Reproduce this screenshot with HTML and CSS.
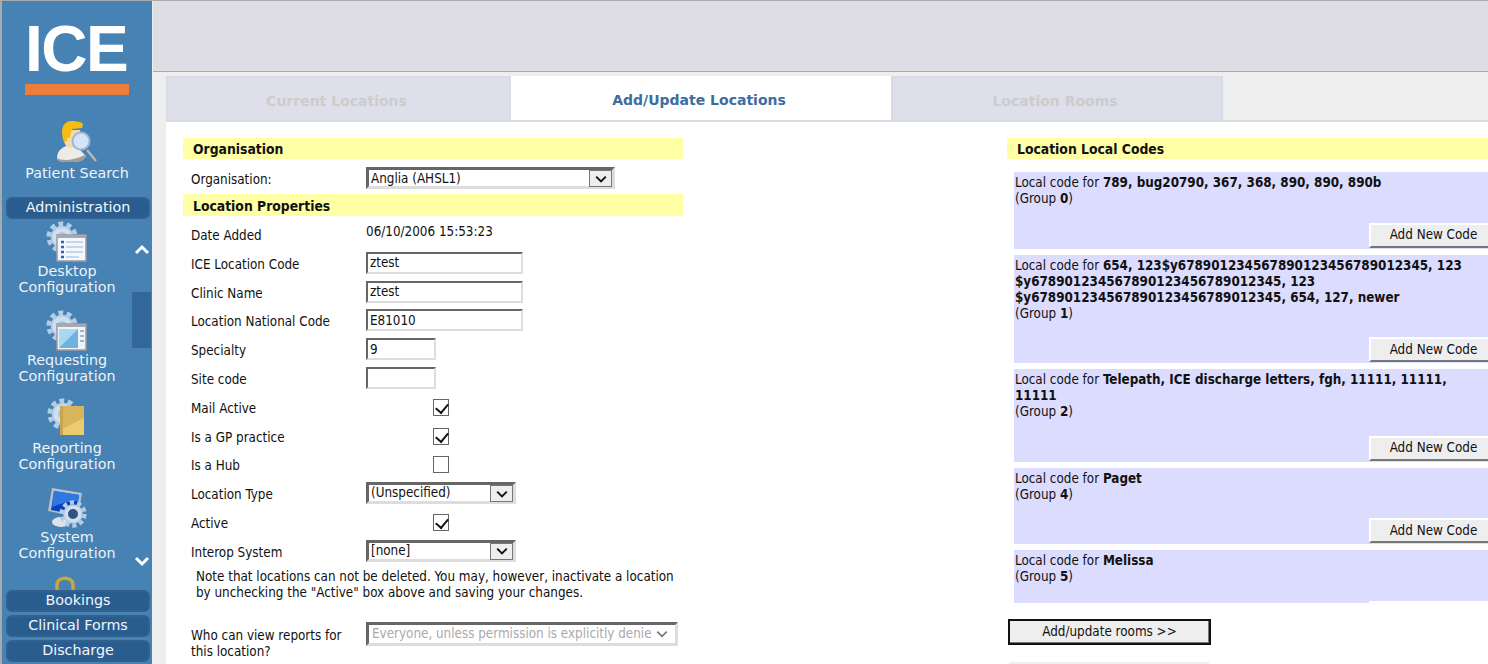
FILE: index.html
```html
<!DOCTYPE html>
<html lang="en">
<head>
    <meta charset="UTF-8">
    <title>ICE - Add/Update Locations</title>
    <link rel="stylesheet" href="styles.css">
</head>
<body>

<svg class="defs" width="0" height="0">
    <defs>
        <symbol id="gear" viewBox="0 0 40 40">
            <circle cx="20" cy="20" r="16.5" fill="none" stroke="#b4cce4" stroke-width="6" stroke-dasharray="6 4.4"/>
            <circle cx="20" cy="20" r="13" fill="#cfdff0" stroke="#b4cce4" stroke-width="2"/>
            <circle cx="20" cy="20" r="6" fill="#a9c4df"/>
        </symbol>
    </defs>
</svg>

<div class="app">

    <nav class="sidebar">
        <div class="logo">
            <div class="logo-text">ICE</div>
            <div class="logo-bar"></div>
        </div>

        <a class="patient-search">
            <svg class="icon" viewBox="0 0 42 42">
                <path d="M1 37c0-8 6-12 14-13l6 2 9 9c-2 5-8 6-15 6S1 41 1 37z" fill="#ecebe6"/>
                <path d="M1 37c4 3 16 3 28-3l1 1c-2 5-8 6-15 6S1 41 1 37z" fill="#9d9c96"/>
                <path d="M8 9h16v10c0 5-4 8-8 8s-8-3-8-8z" fill="#f7d9a8"/>
                <path d="M8 21C4 10 6 0 16 0c4 0 10 1 11 3l-1 4-10 1c-1 3-2 7-2 9-2-1-4 1-3 3z" fill="#f4bd12"/>
                <path d="M31 29l9 11" stroke="#b9b5ab" stroke-width="2.5"/>
                <circle cx="25" cy="20" r="8.5" fill="#d3e4f7" stroke="#9db8d6" stroke-width="2"/>
            </svg>
            <span>Patient Search</span>
        </a>

        <div class="pill">Administration</div>

        <div class="nav-scroll">
            <div class="nav-items">
                <a class="nav-item">
                    <svg class="icon" viewBox="0 0 42 42">
                        <use href="#gear" x="0" y="0" width="32" height="32"/>
                        <rect x="11" y="14" width="29" height="26" fill="#f4f7fb" stroke="#9a9aa2" stroke-width="1.5"/>
                        <rect x="11" y="14" width="29" height="3" fill="#a8a8b0"/>
                        <path d="M15 21h3M15 26h3M15 31h3M15 36h3" stroke="#2a63b8" stroke-width="2.5"/>
                        <path d="M20 21h17M20 26h17M20 31h17M20 36h13" stroke="#b6cde6" stroke-width="1.5"/>
                    </svg>
                    <span>Desktop<br>Configuration</span>
                </a>
                <a class="nav-item">
                    <svg class="icon" viewBox="0 0 42 42">
                        <use href="#gear" x="0" y="0" width="32" height="32"/>
                        <rect x="11" y="14" width="29" height="26" fill="#f0f3f7" stroke="#9a9aa2" stroke-width="1.5"/>
                        <rect x="11" y="14" width="29" height="3" fill="#a8a8b0"/>
                        <rect x="13" y="19" width="19" height="19" fill="#6fb2e0"/>
                        <path d="M13 19h19L13 38z" fill="#a9d8f2"/>
                        <path d="M34 21h4M34 26h4M34 31h4" stroke="#9ab4d0" stroke-width="2"/>
                    </svg>
                    <span>Requesting<br>Configuration</span>
                </a>
                <a class="nav-item">
                    <svg class="icon" viewBox="0 0 42 42">
                        <use href="#gear" x="1" y="0" width="32" height="32"/>
                        <path d="M14 8h24v29H14z" fill="#eacb6d"/>
                        <path d="M14 8h24v12L14 32z" fill="#d8b45c"/>
                        <path d="M14 8h3v29h-3z" fill="#c9a552"/>
                    </svg>
                    <span>Reporting<br>Configuration</span>
                </a>
                <a class="nav-item">
                    <svg class="icon" viewBox="0 0 42 42">
                        <ellipse cx="15" cy="35" rx="9" ry="5" fill="#dfe2e6"/>
                        <path d="M6 1l30 5-4 24-30-6z" fill="#b7c0cc"/>
                        <path d="M8 4l25 4-3 20-25-5z" fill="#0d3fb8"/>
                        <path d="M8 4l25 4-1 6c-10 0-18 3-26 6z" fill="#2f78e0"/>
                        <use href="#gear" x="13" y="13" width="28" height="28"/>
                        <circle cx="27" cy="27" r="5" fill="#31527f"/>
                    </svg>
                    <span>System<br>Configuration</span>
                </a>
                <a class="nav-item">
                    <svg class="icon" viewBox="0 0 42 42">
                        <path d="M11 20V9c0-9 16-9 16 0v11" fill="none" stroke="#c9a73c" stroke-width="3.5"/>
                    </svg>
                </a>
            </div>
            <div class="nav-thumb"></div>
            <svg class="nav-arrow nav-arrow-up" viewBox="0 0 16 12"><path d="M2 10l6-6 6 6" fill="none" stroke="#fff" stroke-width="3"/></svg>
            <svg class="nav-arrow nav-arrow-down" viewBox="0 0 16 12"><path d="M2 2l6 6 6-6" fill="none" stroke="#fff" stroke-width="3"/></svg>
        </div>

        <div class="pill">Bookings</div>
        <div class="pill">Clinical Forms</div>
        <div class="pill">Discharge</div>
    </nav>

    <div class="main">
        <div class="topbar"></div>

        <div class="tabs">
            <div class="tab tab-current">Current Locations</div>
            <div class="tab tab-active">Add/Update Locations</div>
            <div class="tab tab-rooms">Location Rooms</div>
        </div>

        <div class="panel">
            <section class="left">
                <h2 class="section-head">Organisation</h2>
                <div class="org-row">
                    <label>Organisation:</label>
                    <div class="select select-org">
                        <select><option>Anglia (AHSL1)</option></select>
                        <span class="select-btn"><svg viewBox="0 0 10 6"><path d="M1 1l4 4 4-4" fill="none" stroke="#111" stroke-width="1.6"/></svg></span>
                    </div>
                </div>
                <h2 class="section-head">Location Properties</h2>

                <div class="props">
                    <label>Date Added</label>
                    <div class="date-value">06/10/2006 15:53:23</div>

                    <label>ICE Location Code</label>
                    <input class="text-long" type="text" value="ztest">

                    <label>Clinic Name</label>
                    <input class="text-long" type="text" value="ztest">

                    <label>Location National Code</label>
                    <input class="text-long" type="text" value="E81010">

                    <label>Specialty</label>
                    <input class="text-short" type="text" value="9">

                    <label>Site code</label>
                    <input class="text-short" type="text" value="">

                    <label>Mail Active</label>
                    <input class="check" type="checkbox" checked>

                    <label>Is a GP practice</label>
                    <input class="check" type="checkbox" checked>

                    <label>Is a Hub</label>
                    <input class="check" type="checkbox">

                    <label>Location Type</label>
                    <div class="select select-small">
                        <select><option>(Unspecified)</option></select>
                        <span class="select-btn"><svg viewBox="0 0 10 6"><path d="M1 1l4 4 4-4" fill="none" stroke="#111" stroke-width="1.6"/></svg></span>
                    </div>

                    <label>Active</label>
                    <input class="check" type="checkbox" checked>

                    <label>Interop System</label>
                    <div class="select select-small">
                        <select><option>[none]</option></select>
                        <span class="select-btn"><svg viewBox="0 0 10 6"><path d="M1 1l4 4 4-4" fill="none" stroke="#111" stroke-width="1.6"/></svg></span>
                    </div>
                </div>

                <p class="note">Note that locations can not be deleted. You may, however, inactivate a location by unchecking the "Active" box above and saving your changes.</p>

                <div class="who-row">
                    <label>Who can view reports for this location?</label>
                    <div class="select select-who">
                        <select disabled><option>Everyone, unless permission is explicitly denied</option></select>
                        <span class="select-flat"><svg viewBox="0 0 10 6"><path d="M1 1l4 4 4-4" fill="none" stroke="#777" stroke-width="1.4"/></svg></span>
                    </div>
                </div>
            </section>

            <section class="right">
                <h2 class="section-head">Location Local Codes</h2>

                <div class="code-card">
                    <div>Local code for <b>789, bug20790, 367, 368, 890, 890, 890b</b><br>(Group <b>0</b>)</div>
                    <button class="add-code">Add New Code</button>
                </div>
                <div class="code-card">
                    <div>Local code for <b>654, 123$y678901234567890123456789012345, 123 $y678901234567890123456789012345, 123 $y678901234567890123456789012345, 654, 127, newer</b><br>(Group <b>1</b>)</div>
                    <button class="add-code">Add New Code</button>
                </div>
                <div class="code-card">
                    <div>Local code for <b>Telepath, ICE discharge letters, fgh, 11111, 11111, 11111</b><br>(Group <b>2</b>)</div>
                    <button class="add-code">Add New Code</button>
                </div>
                <div class="code-card">
                    <div>Local code for <b>Paget</b><br>(Group <b>4</b>)</div>
                    <button class="add-code">Add New Code</button>
                </div>
                <div class="code-card code-card-cut">
                    <div>Local code for <b>Melissa</b><br>(Group <b>5</b>)</div>
                </div>

                <button class="rooms-btn">Add/update rooms &gt;&gt;</button>
                <button class="next-btn"></button>
            </section>
        </div>
    </div>

</div>

</body>
</html>
```

FILE: styles.css
```css
* { box-sizing: border-box; }
html, body { margin: 0; height: 100%; overflow: hidden; }
body { font-family: "DejaVu Sans Condensed", "DejaVu Sans", sans-serif; font-stretch: condensed; font-size: 10pt; color: #111; background: #eee; }
.defs { position: absolute; }

.app { display: flex; height: 664px; border-top: 1px solid #aaa; border-left: 2px solid #aaa; }

/* sidebar */
.sidebar { width: 150px; flex: none; display: flex; flex-direction: column; background: #4682b4; color: #eef3f8; font-family: "DejaVu Sans", sans-serif; font-stretch: normal; font-size: 14.3px; line-height: 16px; }
.logo { height: 114px; padding: 24px 0 0 23px; }
.logo-text { font-family: "Liberation Sans", sans-serif; font-weight: bold; font-size: 64px; line-height: 48px; letter-spacing: -1.5px; color: #fff; height: 59px; }
.logo-bar { width: 104px; height: 11px; background: #ed7d3a; }
.icon { width: 42px; height: 42px; display: block; }
.patient-search { display: flex; flex-direction: column; align-items: center; height: 76px; margin-top: 6px; }
.patient-search .icon { margin-bottom: 2px; }
.pill { height: 22px; margin: 0 2px 3px 4px; flex: none; background: #2a5d8f; border: 2px solid #33618c; border-radius: 6px; text-align: center; line-height: 16px; color: #f2f6fa; }
.pill:last-child { margin-bottom: 2px; }
.nav-scroll { position: relative; flex: 1; overflow: hidden; margin-top: -1px; }
.nav-items { width: 130px; }
.nav-item { display: flex; flex-direction: column; align-items: center; height: 88.7px; text-align: center; }
.nav-thumb { position: absolute; right: 1px; top: 71px; width: 19px; height: 56px; background: #32689a; }
.nav-arrow { position: absolute; right: 2px; width: 16px; height: 12px; }
.nav-arrow-up { top: 22px; }
.nav-arrow-down { top: 335px; }

/* top of the page */
.main { flex: 1; min-width: 0; margin-left: 1px; display: flex; flex-direction: column; }
.topbar { height: 71px; flex: none; background: #dddde3; border-bottom: 1px solid #a9a9a9; }
.tabs { display: flex; height: 46px; flex: none; margin: 4px 0 0 13px; border-bottom: 2px solid #d6dce3; font-family: "DejaVu Sans", sans-serif; font-stretch: normal; font-weight: bold; font-size: 14px; }
.tab { display: flex; align-items: center; justify-content: center; height: 46px; padding: 3px 4px 0 0; background: #dfdfeb; border: 2px solid #d6dce3; color: #ccc; }
.tab-current { width: 345px; }
.tab-active { width: 380px; background: #fff; color: #3d6d9e; border: 0; border-bottom: 2px solid #d6dce3; }
.tab-rooms { width: 332px; }

/* white panel */
.panel { flex: 1; margin-left: 13px; background: #fff; display: flex; padding: 16px 0 0 17px; overflow: hidden; }
.left { width: 500px; flex: none; }
.right { width: 481px; flex: none; margin-left: 324px; }
.section-head { margin: 0; height: 21px; padding-left: 10px; background: #ffffa5; font-size: 13.8px; line-height: 22px; color: #111; }
.org-row + .section-head { height: 22px; line-height: 24px; }

/* left form */
label { display: block; }
.org-row { display: grid; grid-template-columns: 175px 1fr; height: 35px; padding: 8px 0 0 8px; }
.org-row label { padding-top: 5px; }
.props { display: grid; grid-template-columns: 175px 1fr; grid-auto-rows: 28.8px; padding: 5px 0 0 8px; line-height: 16px; }
.props label { padding-top: 7px; }
.date-value { padding-top: 3px; }
input[type=text] { display: block; height: 22px; margin-top: 2px; padding: 0 2px; border: 2px solid; border-color: #666 #ddd #ddd #666; font: inherit; color: #111; background: #fff; }
.text-long { width: 157px; }
.text-short { width: 70px; }
.check { appearance: none; position: relative; display: block; width: 16px; height: 17px; margin: 5px 0 0 67px; border: 1px solid #666; background: #fff; }
.check:checked::after { content: ""; position: absolute; left: 4px; top: 1px; width: 6px; height: 10px; border: solid #111; border-width: 0 2.5px 2.5px 0; transform: rotate(40deg); }

.select { position: relative; height: 22px; }
.select select { appearance: none; display: block; width: 100%; height: 100%; padding: 0 0 0 2px; border: 3px solid; border-color: #666 #ddd #ddd #666; border-radius: 0; font: inherit; color: #111; background: #fff; }
.select-btn { position: absolute; right: 3px; top: 3px; width: 23px; height: 17px; display: flex; align-items: center; justify-content: center; background: #eee; border: 1px solid #777; }
.select-btn svg, .select-flat svg { width: 12px; height: 8px; }
.select-org { width: 249px; }
.select-small { width: 150px; margin-top: 2px; }
.select-who { width: 312px; height: 24px; }
.select-who select { padding-left: 3px; color: #aaa; background: #fff; opacity: 1; }
.select-flat { position: absolute; right: 5px; top: 4px; width: 22px; height: 16px; display: flex; align-items: center; justify-content: center; background: #fff; }

.note { margin: 2.6px 0 0 13px; width: 487px; line-height: 16px; }
.who-row { display: grid; grid-template-columns: 175px 1fr; padding: 21px 0 0 8px; line-height: 16px; }
.who-row label { padding-top: 6px; width: 160px; }

/* right column */
.code-card { margin: 6px 0 0 7px; padding: 3px 0 0 1px; background: #dcdcff; line-height: 16px; overflow: hidden; position: relative; }
.section-head + .code-card { margin-top: 13px; }
.code-card > div { padding-right: 8px; }
.add-code { display: block; width: 119px; height: 25px; margin: 15.6px 0 1px auto; padding: 0 0 0 8px; border: 0; border-top: 2px solid #fff; border-left: 2px solid #fff; border-bottom: 2px solid #777; background: #eee; font: inherit; color: #111; }
.code-card-cut { height: 52.4px; }
.code-card-cut::after { content: ""; position: absolute; right: 0; bottom: 0; width: 119px; height: 2px; background: #fff; }
.rooms-btn { display: block; width: 203px; height: 26px; margin: 16px 0 0 1px; padding: 0; border: 2px solid #111; background: #eee; box-shadow: inset -1px -1px 0 #777; font: inherit; color: #111; }
.next-btn { display: block; width: 200px; height: 26px; margin: 17px 0 0 2px; padding: 0; border: 0; background: #eee; }
```
